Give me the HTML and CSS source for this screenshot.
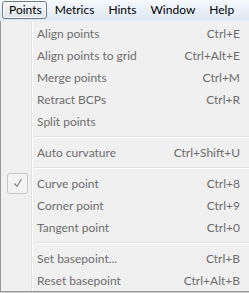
FILE: index.html
```html
<!DOCTYPE html>
<html>
<head>
<meta charset="utf-8">
<link rel="stylesheet" href="styles.css">
</head>
<body>
<div class="menubar">
  <span class="mb-item active">Points</span>
  <span class="mb-item">Metrics</span>
  <span class="mb-item">Hints</span>
  <span class="mb-item">Window</span>
  <span class="mb-item">Help</span>
</div>
<div class="menu">
  <div class="row"><span class="gut"></span><span class="lbl">Align points</span><span class="key">Ctrl+E</span></div>
  <div class="row"><span class="gut"></span><span class="lbl">Align points to grid</span><span class="key">Ctrl+Alt+E</span></div>
  <div class="row"><span class="gut"></span><span class="lbl">Merge points</span><span class="key">Ctrl+M</span></div>
  <div class="row"><span class="gut"></span><span class="lbl">Retract BCPs</span><span class="key">Ctrl+R</span></div>
  <div class="row"><span class="gut"></span><span class="lbl">Split points</span><span class="key"></span></div>
  <div class="sep"><span class="gut"></span><span class="line"></span></div>
  <div class="row"><span class="gut"></span><span class="lbl">Auto curvature</span><span class="key">Ctrl+Shift+U</span></div>
  <div class="sep"><span class="gut"></span><span class="line"></span></div>
  <div class="row"><span class="gut"><span class="check"><svg width="12" height="12" viewBox="0 0 12 12"><path d="M2.5 6.5 L5 9.5 L9.5 2" fill="none" stroke="#8a8a8a" stroke-width="1.3"/></svg></span></span><span class="lbl">Curve point</span><span class="key">Ctrl+8</span></div>
  <div class="row"><span class="gut"></span><span class="lbl">Corner point</span><span class="key">Ctrl+9</span></div>
  <div class="row"><span class="gut"></span><span class="lbl">Tangent point</span><span class="key">Ctrl+0</span></div>
  <div class="sep"><span class="gut"></span><span class="line"></span></div>
  <div class="row"><span class="gut"></span><span class="lbl">Set basepoint...</span><span class="key">Ctrl+B</span></div>
  <div class="row"><span class="gut"></span><span class="lbl">Reset basepoint</span><span class="key">Ctrl+Alt+B</span></div>
</div>
</body>
</html>
```
FILE: styles.css
```css
html, body {
  margin: 0;
  padding: 0;
  width: 249px;
  height: 293px;
  overflow: hidden;
  background: #ffffff;
  font-family: Lato, "Open Sans", sans-serif;
  font-size: 12px;
}
.menubar {
  height: 21px;
  display: flex;
  align-items: center;
  padding-left: 2px;
  box-sizing: border-box;
  background: linear-gradient(#f6f9fd, #dde7f3);
  border-bottom: 1px solid #e6ecf4;
  white-space: nowrap;
}
.mb-item {
  color: #000;
  padding: 0 6px;
  margin-right: 0;
  height: 18px;
  line-height: 16px;
  box-sizing: border-box;
  border: 1px solid transparent;
}
.mb-item.active {
  padding: 0 4px 0 6px;
  margin-right: 1px;
  border: 1px solid #6d7885;
  border-radius: 3px;
  background: linear-gradient(#f4f6f9, #dfe4ea);
  box-shadow: inset 0 0 0 1px #ffffff;
}
.menu {
  width: 249px;
  height: 271px;
  box-sizing: border-box;
  background: #f0f0f0;
  border-left: 1px solid #979797;
  border-bottom: 1px solid #979797;
  padding-top: 1px;
  box-shadow: 0 2px 0 #c9c9c9;
}
.row {
  display: flex;
  height: 22px;
  align-items: center;
  color: #6d6d6d;
}
.gut {
  width: 30px;
  align-self: stretch;
  border-right: 1px solid #e2e3e3;
  box-shadow: 1px 0 0 #ffffff;
  display: flex;
  align-items: center;
  justify-content: center;
  flex: none;
}
.lbl {
  flex: 1;
  padding-left: 5px;
}
.key {
  padding-right: 9px;
}
.sep {
  display: flex;
  height: 9px;
}
.sep .line {
  flex: 1;
  margin-left: 2px;
  align-self: center;
  height: 1px;
  background: #e0e0e0;
  border-bottom: 1px solid #ffffff;
}
.check {
  width: 21px;
  height: 21px;
  box-sizing: border-box;
  border: 1px solid #c6c6c6;
  border-radius: 3px;
  background: #f3f3f3;
  display: flex;
  align-items: center;
  justify-content: center;
  margin-left: 3px;
}
```
